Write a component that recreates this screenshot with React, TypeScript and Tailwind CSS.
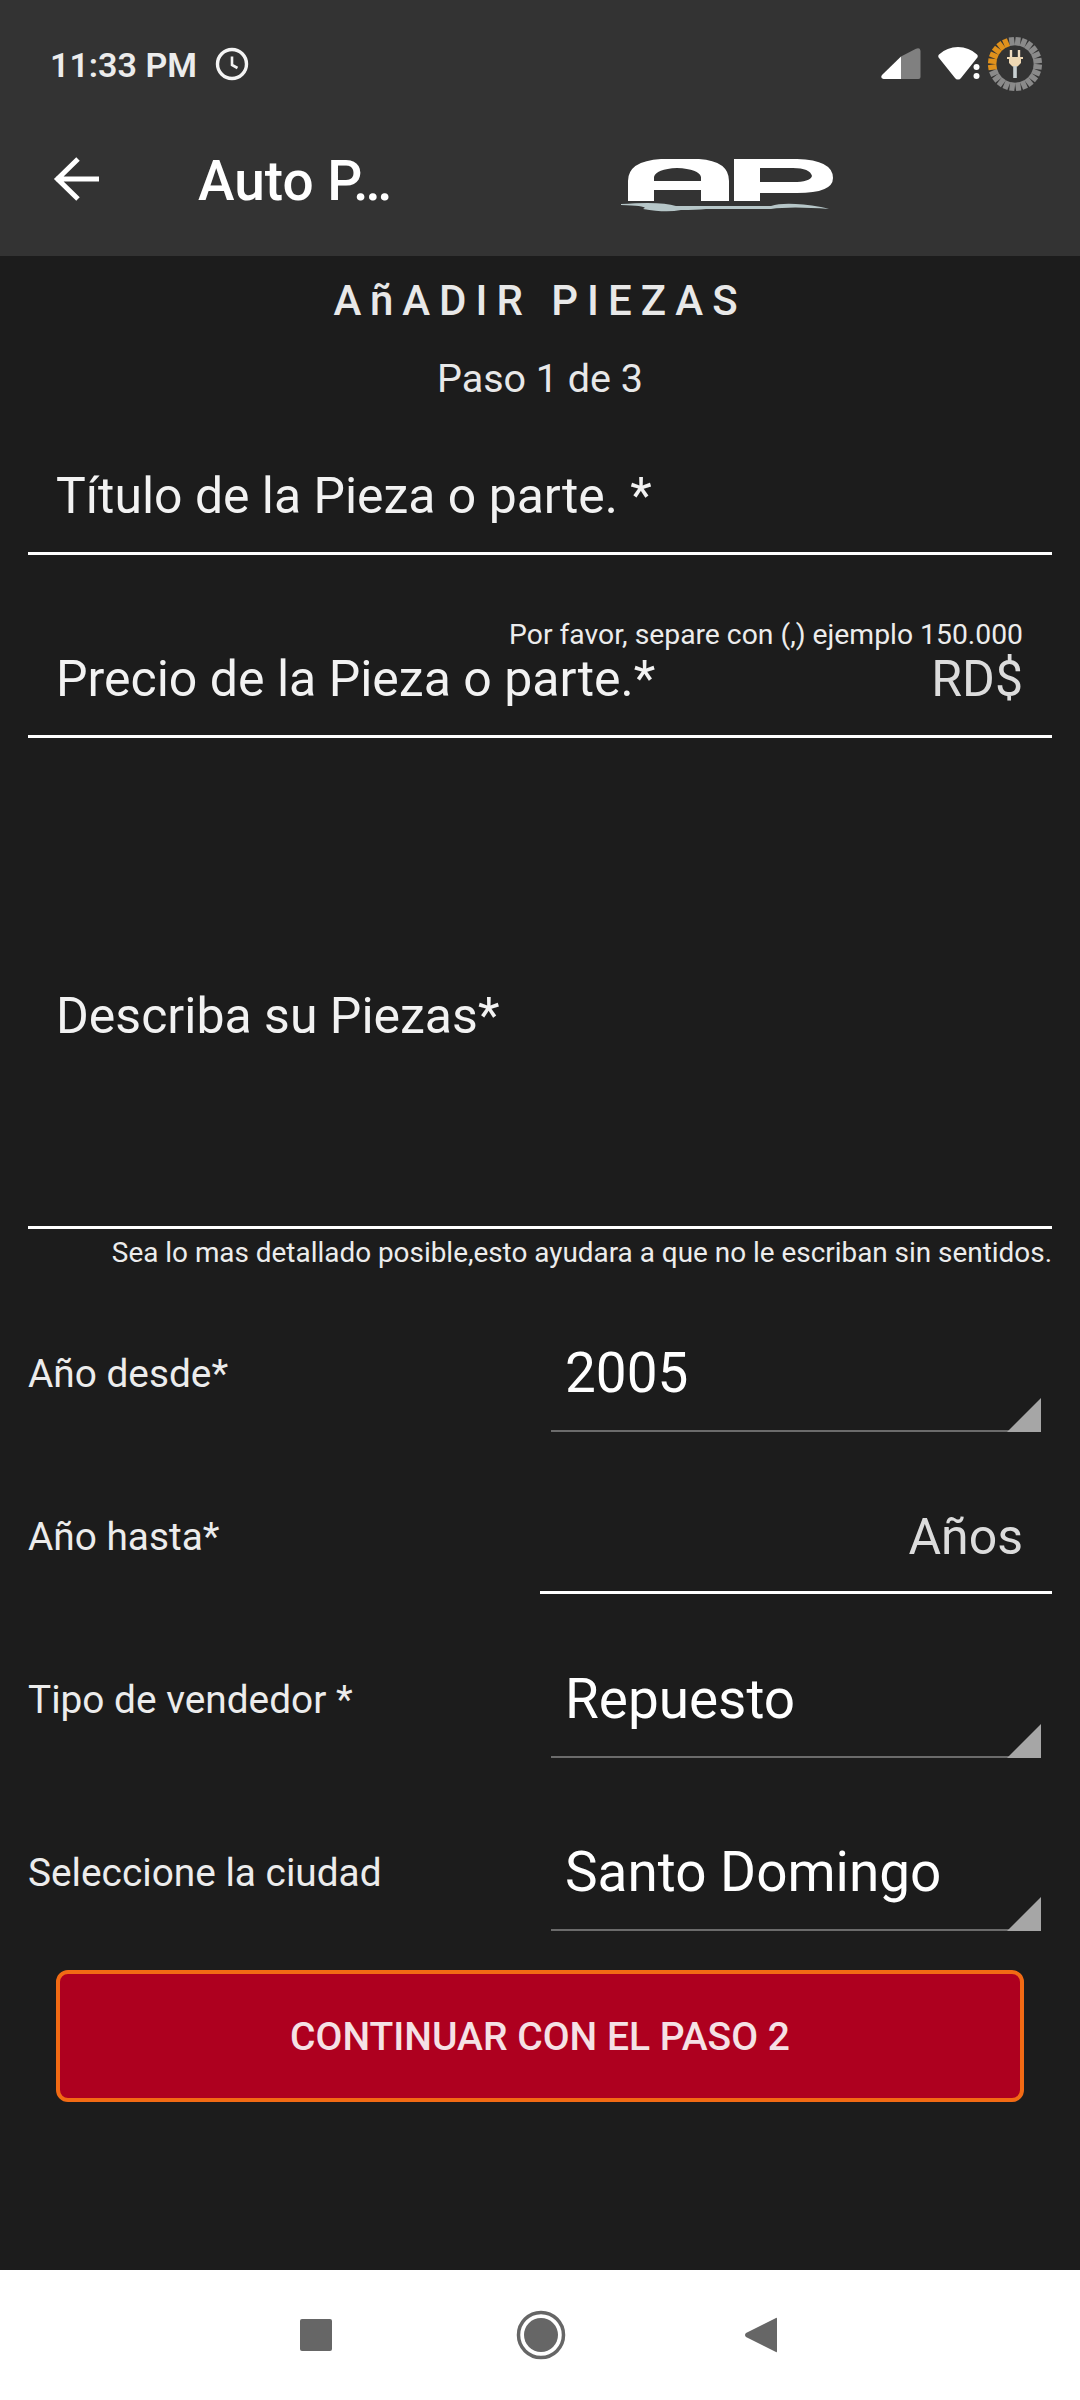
import React from "react";

const font = { fontFamily: "Roboto, 'Noto Sans', sans-serif" };

function Battery() {
  const segs = Array.from({ length: 24 }, (_, i) => i);
  return (
    <svg width="56" height="56" viewBox="-28 -28 56 56">
      {segs.map((i) => {
        const orange = i >= 18;
        return (
          <rect
            key={i}
            x={-2.6}
            y={-27}
            width={5.2}
            height={8.5}
            fill={orange ? "#e0911c" : "#8a8a8a"}
            transform={`rotate(${i * 15 - 8})`}
          />
        );
      })}
      <path d="M-4 -14v7M4 -14v7" stroke="#f0dcc0" strokeWidth="2.4" />
      <path d="M-8 -7h16v2h-2v4l-3.500 3.500h-5L-6 -1v-4h-2z" fill="#eed8b4" />
      <rect x="-1.800" y="2" width="3.600" height="12" fill="#c9d0d2" />
    </svg>
  );
}

function StatusBar() {
  return (
    <div className="flex h-[128px] items-center justify-between pl-[50px] pr-[37px]">
      <div className="flex items-center gap-[18px] text-[34px] font-semibold text-[#ececec]">
        <span className="mt-[1px] leading-[40px]">11:33 PM</span>
        <svg width="34" height="34" viewBox="0 0 34 34" fill="none" stroke="#f4f4f4">
          <circle cx="17" cy="17" r="14.500" strokeWidth="3.400" />
          <path d="M17 9.500V18l5.500 3" strokeWidth="2.600" />
        </svg>
      </div>
      <div className="flex items-center">
        <svg width="40" height="32" viewBox="0 0 40 32" className="mr-[17px] mt-[-1px]">
          <path d="M20 8.500 1 27q-2 3 1.500 4H20z" fill="#ffffff" />
          <path d="M20 8.500 35 .8q4-1.500 4.500 2V29q0 2-2 2H20z" fill="#808080" />
        </svg>
        <svg width="46" height="33" viewBox="0 0 46 33" className="mr-[3px] mt-[-1px]">
          <path d="M20 32.500q-2 0-3-1.500L1 11Q-.5 9 1 7.500 9 0 20 0t19 7.500q1.500 1.500 0 3.500L23 31q-1 1.500-3 1.500z" fill="#ffffff" />
          <circle cx="38.500" cy="20" r="3" fill="#ffffff" />
          <circle cx="38.500" cy="29" r="3" fill="#ffffff" />
        </svg>
        <Battery />
      </div>
    </div>
  );
}

function Logo() {
  return (
    <svg width="214" height="56" viewBox="0 0 214 56">
      <path
        d="M7 44V24Q7 4 40 2H78Q108 4 108 24V44H80V33H33V44ZM33 24H80V20Q78 12 56 11 35 12 33 20Z"
        fill="#ffffff"
        fillRule="evenodd"
      />
      <path
        d="M113 44V2H176Q212 3 212 21 212 36 176 36H139V44ZM139 25H172Q189 25 191 19 189 11 172 11H139Z"
        fill="#ffffff"
        fillRule="evenodd"
      />
      <path d="M0 47Q40 44 55 49H150Q165 44 200 50 205 51 208 52 170 49 150 52H85Q75 53 60 53 45 56 22 52 30 49 0 48Z" fill="#b6c6c8" />
    </svg>
  );
}

function Header() {
  return (
    <div className="flex h-[128px] items-start bg-[#333333]">
      <svg width="48" height="48" viewBox="0 0 48 48" className="ml-[53px] mt-[27px]" fill="none" stroke="#ffffff" strokeWidth="5">
        <path d="M3 24H46M25 4 4.500 24 25 44" />
      </svg>
      <div className="ml-[97px] mt-[21px] w-[423px] whitespace-nowrap text-[55px] font-medium leading-[64px] text-white">Auto P…</div>
      <div className="mt-[29px]">
        <Logo />
      </div>
    </div>
  );
}

function Field({ children, className }: { children: React.ReactNode; className: string }) {
  return <div className={`mx-[28px] flex flex-col justify-end border-b-[3px] border-white pl-[28px] pr-[29px] ${className}`}>{children}</div>;
}

function Select({ value }: { value: string }) {
  return (
    <div className="relative ml-[11px] h-full w-[490px] border-b-2 border-[#6b6b6b] pl-[14px] pt-[2px]">
      <div className="text-[54.900px] leading-[64px] text-white">{value}</div>
      <svg width="34" height="34" viewBox="0 0 34 34" className="absolute bottom-[-2px] right-0">
        <path d="M0 34 34 0V34Z" fill="#a6a6a6" />
      </svg>
    </div>
  );
}

function Row({ label, height, children }: { label: string; height: string; children: React.ReactNode }) {
  return (
    <div className={`flex items-end pl-[28px] ${height}`}>
      <div className="mb-[-1px] w-[512px] self-end text-[38.800px] leading-[50px] text-[#ececec]">{label}</div>
      {children}
    </div>
  );
}

export default function App() {
  return (
    <div className="flex h-[2400px] w-[1080px] flex-col overflow-hidden bg-[#1c1c1c]" style={font}>
      <div className="bg-[#333333]">
        <StatusBar />
        <Header />
      </div>

      <div className="flex-1">
        <div className="flex h-[90px] items-center justify-center">
          <div className="whitespace-nowrap text-[42px] font-medium leading-[50px] tracking-[9px] text-[#e8e8e8]">AñADIR PIEZAS</div>
        </div>
        <div className="flex h-[66px] items-center justify-center text-[39.500px] text-[#e8e8e8]">Paso 1 de 3</div>

        <Field className="h-[143px] pb-[26px]">
          <div className="text-[49.900px] leading-[60px] text-[#f2f2f2]">Título de la Pieza o parte. *</div>
        </Field>

        <Field className="h-[183px] pb-[26px]">
          <div className="mb-[-6px] text-right text-[28.300px] leading-[40px] text-[#ececec]">Por favor, separe con (,) ejemplo 150.000</div>
          <div className="flex items-center justify-between">
            <span className="text-[50px] leading-[60px] text-[#f2f2f2]">Precio de la Pieza o parte.*</span>
            <span className="text-[50px] leading-[60px] text-[#dcdcdc]">RD$</span>
          </div>
        </Field>

        <Field className="h-[491px] pb-[180px]">
          <div className="text-[50px] leading-[60px] text-[#f2f2f2]">Describa su Piezas*</div>
        </Field>

        <div className="flex h-[44px] items-center justify-end pr-[28px] pt-[3px] text-[27.900px] text-[#ececec]">
          Sea lo mas detallado posible,esto ayudara a que no le escriban sin sentidos.
        </div>

        <Row label="Año desde*" height="h-[159px] pb-[34px]">
          <div className="-mb-[34px] h-[93px] self-end">
            <Select value="2005" />
          </div>
        </Row>

        <div className="flex h-[162px] items-end pl-[28px]">
          <div className="mb-[-1px] w-[512px] pb-[33px] text-[38.800px] leading-[50px] text-[#ececec]">Año hasta*</div>
          <div className="h-[92px] w-[512px] border-b-[3px] border-white pr-[29px] pt-[5px] text-right text-[50px] leading-[60px] text-[#dcdcdc]">Años</div>
        </div>

        <Row label="Tipo de vendedor *" height="h-[164px] pb-[34px]">
          <div className="-mb-[34px] h-[93px] self-end">
            <Select value="Repuesto" />
          </div>
        </Row>

        <Row label="Seleccione la ciudad" height="h-[173px] pb-[34px]">
          <div className="-mb-[34px] h-[93px] self-end">
            <Select value="Santo Domingo" />
          </div>
        </Row>

        <div className="mx-[56px] mt-[39px] flex h-[132px] items-center justify-center rounded-[12px] border-[4px] border-[#f26a14] bg-[#ae001f] pt-[3px] text-[39px] font-medium text-[#f5e1e5]">
          CONTINUAR CON EL PASO 2
        </div>
      </div>

      <div className="flex h-[130px] items-center justify-center bg-white pr-[4px]">
        <div className="h-[32px] w-[32px] rounded-[2px] bg-[#666666]" />
        <svg width="50" height="50" viewBox="0 0 50 50" className="ml-[184px]">
          <circle cx="25" cy="25" r="22.500" fill="none" stroke="#666666" strokeWidth="3.500" />
          <circle cx="25" cy="25" r="17" fill="#666666" />
        </svg>
        <svg width="32" height="36" viewBox="0 0 32 36" className="ml-[179px]">
          <path d="M31 1q1-1 1 1V34q0 2-1 1L1 20q-2-2 0-4Z" fill="#666666" />
        </svg>
      </div>
    </div>
  );
}
